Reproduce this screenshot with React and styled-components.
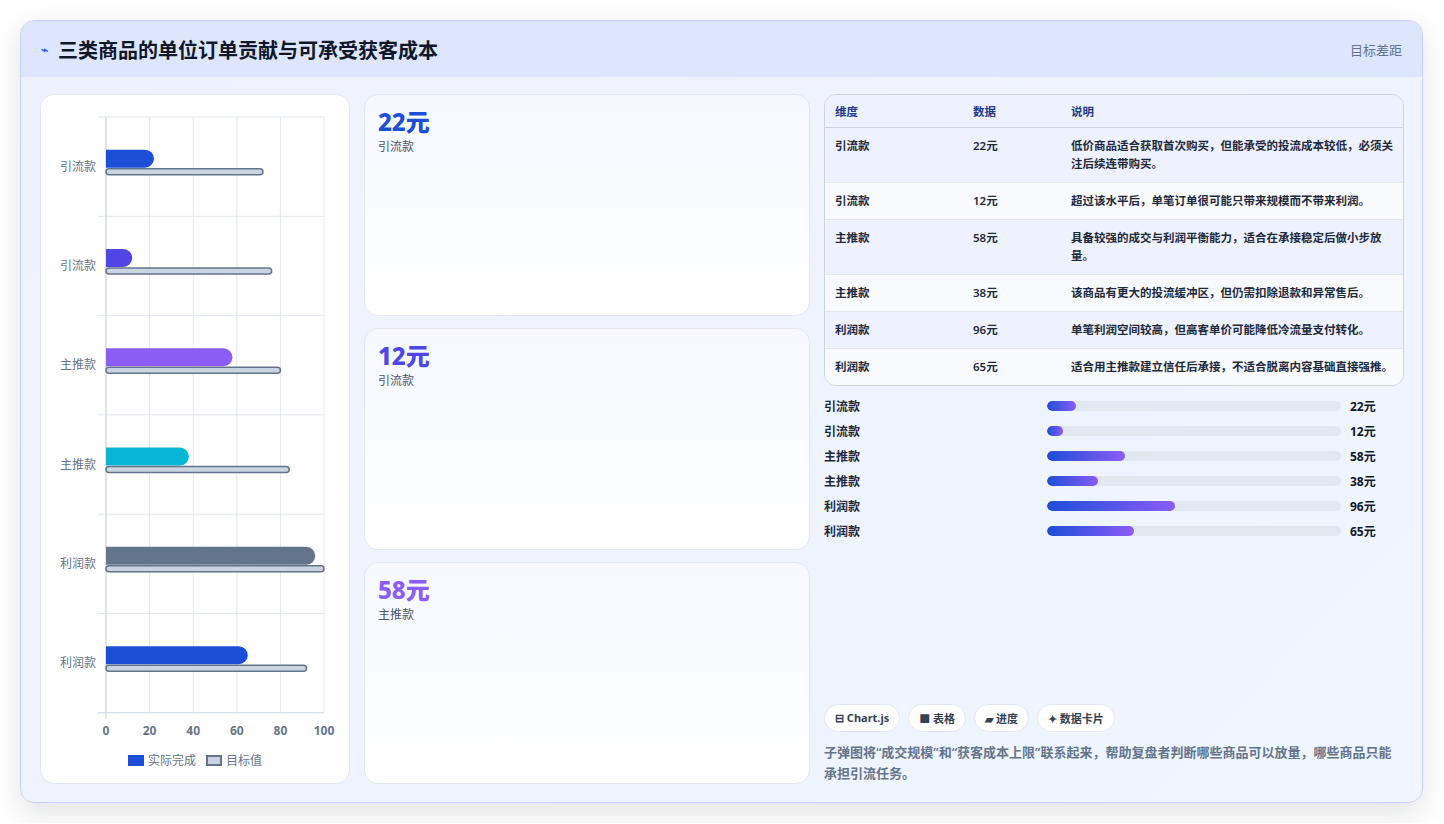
import React from "react";
import styled, { createGlobalStyle } from "styled-components";

const GlobalStyle = createGlobalStyle`
  html, body { margin: 0; padding: 0; background: #ffffff; }
  body { font-family: "Noto Sans", "Noto Sans CJK SC", sans-serif; }
`;

const rows = [
  { name: "引流款", value: 22, target: 72, color: "#1d4ed8", note: "低价商品适合获取首次购买，但能承受的投流成本较低，必须关注后续连带购买。" },
  { name: "引流款", value: 12, target: 76, color: "#4f46e5", note: "超过该水平后，单笔订单很可能只带来规模而不带来利润。" },
  { name: "主推款", value: 58, target: 80, color: "#8b5cf6", note: "具备较强的成交与利润平衡能力，适合在承接稳定后做小步放量。" },
  { name: "主推款", value: 38, target: 84, color: "#06b6d4", note: "该商品有更大的投流缓冲区，但仍需扣除退款和异常售后。" },
  { name: "利润款", value: 96, target: 100, color: "#64748b", note: "单笔利润空间较高，但高客单价可能降低冷流量支付转化。" },
  { name: "利润款", value: 65, target: 92, color: "#1d4ed8", note: "适合用主推款建立信任后承接，不适合脱离内容基础直接强推。" },
];

const Page = styled.div`
  padding: 20px 20px 20px 20px;
`;

const Frame = styled.div`
  width: 1403px;
  height: 783px;
  box-sizing: border-box;
  border: 1px solid #c7d2fe;
  border-radius: 14px;
  background: linear-gradient(135deg, #eef2ff 0%, #eff6ff 100%);
  box-shadow: 0 10px 30px rgba(15, 23, 42, 0.12);
  overflow: hidden;
  display: flex;
  flex-direction: column;
`;

const Header = styled.div`
  height: 56px;
  flex: none;
  background: #dde6fd;
  display: flex;
  align-items: center;
  justify-content: space-between;
  padding: 0 20px;
`;

const Title = styled.h1`
  margin: 0;
  font-size: 20px;
  font-weight: 700;
  color: #0f172a;
  display: flex;
  align-items: center;
  gap: 10px;
`;

const Bolt = styled.span`
  color: #2563eb;
  font-size: 12px;
`;

const HeaderTag = styled.span`
  font-size: 13px;
  color: #64748b;
`;

const Body = styled.div`
  flex: 1;
  display: grid;
  grid-template-columns: 310px 446px 1fr;
  gap: 14px;
  padding: 17px 18px 18px 19px;
  min-height: 0;
`;

const Card = styled.div`
  background: ${(p) => (p.soft ? "linear-gradient(180deg, #f5f8ff 0%, #ffffff 100%)" : "#ffffff")};
  border: 1px solid #e2e8f0;
  border-radius: 14px;
  box-sizing: border-box;
`;

const ChartCard = styled(Card)`
  padding: 14px 8px 12px 8px;
  display: flex;
  flex-direction: column;
`;

const Legend = styled.div`
  display: flex;
  justify-content: center;
  gap: 10px;
  font-size: 12px;
  color: #64748b;
  margin-top: 2px;
`;

const LegendItem = styled.span`
  display: flex;
  align-items: center;
  gap: 4px;
`;

const Swatch = styled.span`
  width: 16px;
  height: 11px;
  box-sizing: border-box;
  background: ${(p) => p.bg};
  border: ${(p) => (p.outline ? "2px solid #64748b" : "none")};
`;

const Stack = styled.div`
  display: grid;
  grid-template-rows: repeat(3, 1fr);
  gap: 12px;
`;

const StatCard = styled(Card)`
  padding: 12px 13px;
`;

const StatValue = styled.div`
  font-size: 24px;
  font-weight: 800;
  line-height: 30px;
  color: ${(p) => p.color};
`;

const StatLabel = styled.div`
  font-size: 12px;
  color: #475569;
`;

const Right = styled.div`
  display: flex;
  flex-direction: column;
  min-width: 0;
`;

const TableWrap = styled.div`
  border: 1px solid #cbd5e1;
  border-radius: 12px;
  overflow: hidden;
  background: #eef2ff;
`;

const Table = styled.table`
  width: 100%;
  border-collapse: collapse;
  font-size: 11.5px;
  color: #1e293b;
`;

const Th = styled.th`
  text-align: left;
  font-weight: 700;
  color: #1e3a8a;
  padding: 8px 10px;
  height: 16px;
  border-bottom: 1px solid #cbd5e1;
  background: #eef2ff;
  width: ${(p) => p.w || "auto"};
`;

const Td = styled.td`
  padding: 9px 10px;
  font-weight: 600;
  line-height: 18px;
  vertical-align: top;
  border-top: 1px solid #e2e8f0;
`;

const Tr = styled.tr`
  background: ${(p) => (p.alt ? "#f8fafc" : "#eef2ff")};
`;

const Bars = styled.div`
  display: flex;
  flex-direction: column;
  gap: 7px;
  margin-top: 11px;
`;

const BarRow = styled.div`
  display: grid;
  grid-template-columns: 214px 294px 40px;
  gap: 9px;
  align-items: center;
  font-size: 12px;
  font-weight: 600;
  color: #1e293b;
  height: 18px;
`;

const Track = styled.div`
  height: 10px;
  background: #e2e8f0;
  border-radius: 6px;
  overflow: hidden;
`;

const Fill = styled.div`
  height: 100%;
  border-radius: 6px;
  background: linear-gradient(90deg, #1d4ed8, #8b5cf6);
`;

const BarValue = styled.span`
  font-weight: 700;
  color: #0f172a;
`;

const Spacer = styled.div`
  flex: 1;
`;

const Chips = styled.div`
  display: flex;
  gap: 8px;
`;

const Chip = styled.span`
  background: #ffffff;
  border: 1px solid #e2e8f0;
  border-radius: 14px;
  padding: 5px 10px;
  font-size: 11px;
  font-weight: 700;
  color: #334155;
`;

const Summary = styled.p`
  margin: 10px 0 0;
  font-size: 13px;
  line-height: 21px;
  font-weight: 600;
  color: #64748b;
`;

function BulletChart() {
  const x0 = 57, x1 = 275, top = 8, rowH = 99.3;
  const sx = (v) => x0 + ((x1 - x0) * v) / 100;
  return (
    <svg width="292" height="640" viewBox="0 0 292 640">
      {[0, 20, 40, 60, 80, 100].map((t) => (
        <line key={t} x1={sx(t)} x2={sx(t)} y1={top} y2={top + rowH * 6} stroke="#e2e8f0" />
      ))}
      {Array.from({ length: 7 }).map((_, i) => (
        <line key={i} x1={x0 - 8} x2={x1} y1={top + rowH * i} y2={top + rowH * i} stroke={i === 6 ? "#cbd5e1" : "#e2e8f0"} />
      ))}
      <line x1={x0} x2={x0} y1={top} y2={top + rowH * 6 + 6} stroke="#cbd5e1" />
      {rows.map((r, i) => {
        const cy = top + rowH * i + rowH / 2;
        return (
          <g key={i}>
            <text x={x0 - 10} y={cy + 4} textAnchor="end" fontSize="12" fill="#64748b">{r.name}</text>
            <path d={`M${x0} ${cy - 17} H${sx(r.value) - 9} a9 9 0 0 1 0 18 H${x0} Z`} fill={r.color} />
            <rect x={x0} y={cy + 2} width={sx(r.target) - x0} height={6} rx={3} fill="#cbd5e1" stroke="#64748b" strokeWidth="1.5" />
          </g>
        );
      })}
      {[0, 20, 40, 60, 80, 100].map((t) => (
        <text key={t} x={sx(t)} y={top + rowH * 6 + 22} textAnchor="middle" fontSize="12" fontWeight="700" fill="#64748b">{t}</text>
      ))}
    </svg>
  );
}

const stats = [
  { v: "22元", l: "引流款", c: "#1d4ed8" },
  { v: "12元", l: "引流款", c: "#4f46e5" },
  { v: "58元", l: "主推款", c: "#8b5cf6" },
];

export default function App() {
  return (
    <Page>
      <GlobalStyle />
      <Frame>
        <Header>
          <Title><Bolt>⌁</Bolt>三类商品的单位订单贡献与可承受获客成本</Title>
          <HeaderTag>目标差距</HeaderTag>
        </Header>
        <Body>
          <ChartCard>
            <BulletChart />
            <Legend>
              <LegendItem><Swatch bg="#1d4ed8" />实际完成</LegendItem>
              <LegendItem><Swatch bg="#cbd5e1" outline />目标值</LegendItem>
            </Legend>
          </ChartCard>
          <Stack>
            {stats.map((s, i) => (
              <StatCard soft key={i}>
                <StatValue color={s.c}>{s.v}</StatValue>
                <StatLabel>{s.l}</StatLabel>
              </StatCard>
            ))}
          </Stack>
          <Right>
            <TableWrap>
              <Table>
                <thead>
                  <tr>
                    <Th w="118px">维度</Th>
                    <Th w="78px">数据</Th>
                    <Th>说明</Th>
                  </tr>
                </thead>
                <tbody>
                  {rows.map((r, i) => (
                    <Tr key={i} alt={i % 2 === 1}>
                      <Td>{r.name}</Td>
                      <Td>{r.value}元</Td>
                      <Td>{r.note}</Td>
                    </Tr>
                  ))}
                </tbody>
              </Table>
            </TableWrap>
            <Bars>
              {rows.map((r, i) => (
                <BarRow key={i}>
                  <span>{r.name}</span>
                  <Track><Fill style={{ width: `${(r.value / 220) * 100}%` }} /></Track>
                  <BarValue>{r.value}元</BarValue>
                </BarRow>
              ))}
            </Bars>
            <Spacer />
            <Chips>
              <Chip>⊟ Chart.js</Chip>
              <Chip>■ 表格</Chip>
              <Chip>▰ 进度</Chip>
              <Chip>✦ 数据卡片</Chip>
            </Chips>
            <Summary>子弹图将“成交规模”和“获客成本上限”联系起来，帮助复盘者判断哪些商品可以放量，哪些商品只能承担引流任务。</Summary>
          </Right>
        </Body>
      </Frame>
    </Page>
  );
}
